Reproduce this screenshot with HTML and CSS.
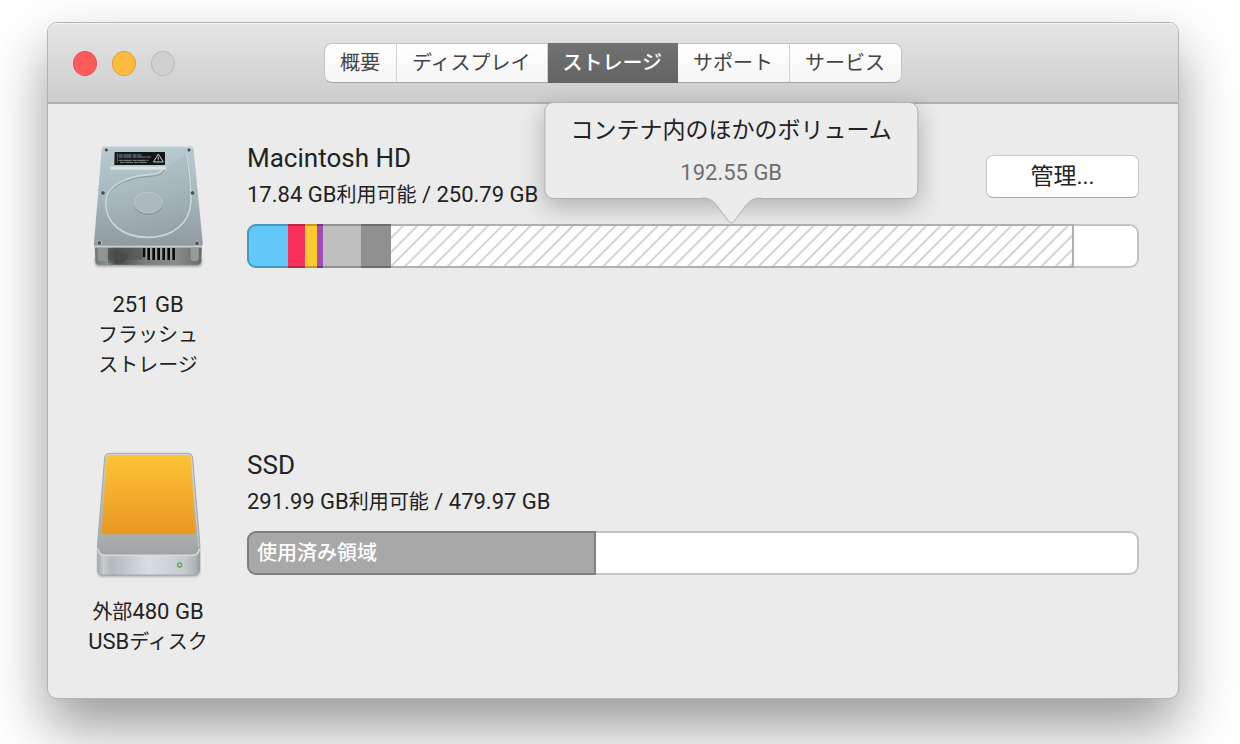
FILE: index.html
```
<!DOCTYPE html>
<html lang="ja">
<head>
    <meta charset="utf-8">
    <meta name="viewport" content="width=device-width,initial-scale=1.0">
    <title>ストレージ</title>
    <link rel="stylesheet" href="styles.css">
</head>
<body>
    <main class="window">
        <header class="toolbar">
            <div class="lights">
                <button class="light close" aria-label="閉じる"></button>
                <button class="light minimize" aria-label="しまう"></button>
                <button class="light" aria-label="拡大" disabled></button>
            </div>
            <nav class="tabs">
                <button>概要</button>
                <button>ディスプレイ</button>
                <button class="active">ストレージ</button>
                <button>サポート</button>
                <button>サービス</button>
            </nav>
        </header>
        <div class="content">
            <section class="disk">
                <div class="device">
                    <svg class="icon" viewBox="-6 0 420 450" aria-hidden="true">
                        <defs>
                            <linearGradient id="hd-top" x1="0" y1="0" x2="0" y2="1">
                                <stop offset="0" stop-color="#b9cbd1"/>
                                <stop offset=".45" stop-color="#a9b9c0"/>
                                <stop offset="1" stop-color="#8f999e"/>
                            </linearGradient>
                            <linearGradient id="hd-plate" x1="0" y1="0" x2="1" y2="1">
                                <stop offset="0" stop-color="#b7c9d0"/>
                                <stop offset="1" stop-color="#8f9da3"/>
                            </linearGradient>
                            <linearGradient id="hd-front" x1="0" y1="0" x2="1" y2="0">
                                <stop offset="0" stop-color="#737779"/>
                                <stop offset=".12" stop-color="#8b8f90"/>
                                <stop offset=".2" stop-color="#46494a"/>
                                <stop offset=".45" stop-color="#777b7c"/>
                                <stop offset=".75" stop-color="#8a8e8f"/>
                                <stop offset="1" stop-color="#65696a"/>
                            </linearGradient>
                            <filter id="soft" x="-20%" y="-100%" width="140%" height="300%"><feGaussianBlur stdDeviation="4"/></filter>
                        </defs>
                        <rect x="46" y="380" width="318" height="28" rx="10" fill="#555" opacity=".7" filter="url(#soft)"/>
                        <path d="M44 346H366L364 392Q363 404 350 404H60Q47 404 46 392Z" fill="url(#hd-front)"/>
                        <path d="M84 354H186V390H84Z" fill="#505354" opacity=".6"/>
                        <path d="M84 354L150 376L132 398H84Z" fill="#3d4041" opacity=".4"/>
                        <path d="M54 354H78V390Q66 398 54 390Z" fill="#8f9495"/>
                        <path d="M332 354H356V390Q344 398 332 390Z" fill="#969b9c"/>
                        <path d="M186 354H286V390H200L186 368Z" fill="#9a9d9d"/>
                        <path d="M192 354V382M206 354V390M221 354V390M236 354V390M251 354V390M266 354V390M281 354V390" stroke="#090b0b" stroke-width="8"/>
                        <path d="M76 48Q66 49 65 60L42 338Q41 351 52 352H358Q369 351 368 338L341 60Q340 49 330 48Z" fill="url(#hd-top)"/>
                        <path d="M44 350H366" stroke="#cbd1d3" stroke-width="5"/>
                        <path d="M70 50H337" stroke="#d8e2e5" stroke-width="3"/>
                        <path d="M320 76C328 120 334 180 333 218C330 285 276 326 204 326C128 326 76 284 77 220C78 174 128 142 208 136Q252 134 252 114" fill="url(#hd-plate)" fill-opacity=".4" stroke="none"/>
                        <path d="M320 78C328 124 335 184 334 220C331 286 277 328 204 328C127 328 76 286 77 222C78 176 128 144 208 138Q250 136 252 116" fill="none" stroke="#92a2a8" stroke-width="6"/>
                        <path d="M320 74C328 120 334 180 333 216C330 281 276 322 204 322C128 322 76 280 77 218C78 172 128 140 208 134Q248 132 250 112" fill="none" stroke="#cad7db" stroke-width="5"/>
                        <ellipse cx="205" cy="223" rx="43" ry="31" fill="#87959a"/>
                        <ellipse cx="205" cy="218" rx="42" ry="31" fill="#abb8bc" stroke="#becacd" stroke-width="3"/>
                        <path d="M98 64H255L258 116H91Z" fill="#b8c8ce"/>
                        <path d="M91 110H258V119H91Z" fill="#dae3e6"/>
                        <path d="M104 66H255V105H103Z" fill="#131616"/>
                        <path d="M112 70V99" stroke="#8c9698" stroke-width="2"/>
                        <path d="M116 75H184M116 81H214M116 91H205M120 97H200" stroke="#849092" stroke-width="3" stroke-dasharray="12 2 25 3"/>
                        <path d="M235 72L220 96H250Z" fill="none" stroke="#c2cacc" stroke-width="3"/>
                        <path d="M235 80V89M235 92V94" stroke="#c2cacc" stroke-width="3"/>
                        <g fill="#465056" stroke="#d7e0e3" stroke-width="2">
                            <circle cx="79" cy="60" r="6"/><circle cx="327" cy="60" r="6"/>
                            <circle cx="69" cy="189" r="7"/><circle cx="338" cy="189" r="7"/>
                            <circle cx="58" cy="339" r="7"/><circle cx="351" cy="340" r="7"/>
                        </g>
                    </svg>
                    <p>251 GB<br><span class="ja">フラッシュ<br>ストレージ</span></p>
                </div>
                <div class="info">
                    <div class="heading">
                        <div>
                            <h2>Macintosh HD</h2>
                            <p>17.84 GB<span class="ja">利用可能</span> / 250.79 GB</p>
                        </div>
                        <button class="manage">管理...</button>
                    </div>
                    <div class="bar">
                        <span class="part blue" style="width:4.6%"></span>
                        <span class="part red" style="width:1.9%"></span>
                        <span class="part yellow" style="width:1.3%"></span>
                        <span class="part purple" style="width:0.7%"></span>
                        <span class="part silver" style="width:4.3%"></span>
                        <span class="part gray" style="width:3.3%"></span>
                        <div class="part other" style="width:76.6%">
                            <div class="popover" role="tooltip">
                                <strong>コンテナ内のほかのボリューム</strong>
                                <span>192.55 GB</span>
                                <svg class="arrow" viewBox="0 0 60 27" aria-hidden="true">
                                    <path d="M0 0V1C9 1 12 4 16 9L27 24Q30 28 33 24L44 9C48 4 51 1 60 1V0Z" fill="#ececec"/>
                                    <path d="M0 1C9 1 12 4 16 9L27 24Q30 28 33 24L44 9C48 4 51 1 60 1" fill="none" stroke="#b0b0b0"/>
                                </svg>
                            </div>
                        </div>
                    </div>
                </div>
            </section>
            <section class="disk">
                <div class="device">
                    <svg class="icon" viewBox="-6 -9 420 450" aria-hidden="true">
                        <defs>
                            <linearGradient id="ssd-label" x1="0" y1="0" x2="0" y2="1">
                                <stop offset="0" stop-color="#fec338"/>
                                <stop offset="1" stop-color="#e99721"/>
                            </linearGradient>
                            <linearGradient id="ssd-top" x1="0" y1="0" x2="0" y2="1">
                                <stop offset="0" stop-color="#c9cdc9"/>
                                <stop offset=".8" stop-color="#abafb0"/>
                                <stop offset="1" stop-color="#9fa3a4"/>
                            </linearGradient>
                            <linearGradient id="ssd-front" x1="0" y1="0" x2="1" y2="0">
                                <stop offset="0" stop-color="#a3a8aa"/>
                                <stop offset=".06" stop-color="#c8cdd0"/>
                                <stop offset=".13" stop-color="#b3b9bc"/>
                                <stop offset=".5" stop-color="#d7dde0"/>
                                <stop offset=".85" stop-color="#c4cacd"/>
                                <stop offset=".95" stop-color="#aeb4b7"/>
                                <stop offset="1" stop-color="#959b9e"/>
                            </linearGradient>
                        </defs>
                        <rect x="54" y="382" width="304" height="27" rx="12" fill="#666" opacity=".6" filter="url(#soft)"/>
                        <path d="M52 330H360V386Q360 405 340 405H72Q52 405 52 386Z" fill="url(#ssd-front)" stroke="#989e9f" stroke-width="2"/>
                        <path d="M88 40H324Q336 40 338 54L360 320Q360 345 339 346H73Q52 345 52 320L74 54Q76 40 88 40Z" fill="url(#ssd-top)" stroke="#a2a8a5" stroke-width="3"/>
                        <path d="M54 326Q56 345 73 346H339Q356 345 358 326" fill="none" stroke="#d6dadc" stroke-width="5"/>
                        <path d="M78 54Q80 44 89 44H323Q332 44 334 54L356 320" fill="none" stroke="#d9ddda" stroke-width="2"/>
                        <path d="M88 45H323Q331 45 332 54L347 275Q347 283 338 283H73Q64 283 65 275L80 54Q81 45 88 45Z" fill="url(#ssd-label)"/>
                        <circle cx="299" cy="375" r="6" fill="#c4e5bc" stroke="#5ba453" stroke-width="4"/>
                    </svg>
                    <p><span class="ja">外部</span>480 GB<br>USB<span class="ja">ディスク</span></p>
                </div>
                <div class="info">
                    <div class="heading">
                        <div>
                            <h2>SSD</h2>
                            <p>291.99 GB<span class="ja">利用可能</span> / 479.97 GB</p>
                        </div>
                    </div>
                    <div class="bar">
                        <span class="part used" style="width:39.1%">使用済み領域</span>
                    </div>
                </div>
            </section>
        </div>
    </main>
</body>
</html>
```

FILE: styles.css
```
* { box-sizing: border-box; }
body {
    display: flex;
    min-height: 100vh;
    margin: 0;
    padding: 22px 61px 45px 47px;
    background: white;
    color: #222;
    font-family: Roboto, "Noto Sans CJK JP", sans-serif;
    font-size: 22px;
}
h2, p { margin: 0; font-weight: 400; }
button { font-family: inherit; }

.window {
    flex: 1;
    border: 1px solid #b2b2b2;
    border-radius: 10px;
    background: #ebebeb;
    box-shadow: 0 28px 56px rgba(0,0,0,.4);
}
.toolbar {
    display: grid;
    grid-template-columns: 1fr auto 1fr;
    align-items: center;
    height: 81px;
    padding: 1px 25px 0;
    border-bottom: 2px solid #b1b1b1;
    border-radius: 9px 9px 0 0;
    background: linear-gradient(#e5e5e5, #cdcdcd);
    box-shadow: inset 0 1px #f4f4f4;
}
.lights { display: flex; gap: 15px; }
.light { width: 24px; height: 25px; padding: 0; border: 1px solid #b9b9b9; border-radius: 50%; background: #d0d0d0; }
.close { border-color: #e2514e; background: #fc5b57; }
.minimize { border-color: #dfa136; background: #fdbc40; }

.tabs { display: flex; height: 40px; border: 1px solid #c3c3c3; border-bottom-color: #a5a5a5; border-radius: 8px; background: linear-gradient(#fff, #f5f5f5); }
.tabs button { margin: 0; padding: 0 16px 0 15px; border: 0; border-right: 1px solid #d2d2d2; background: none; color: #444; font-size: 20px; line-height: 38px; }
.tabs button:last-child { border-right: 0; }
.tabs .active { margin: -1px 0; border: 0; background: linear-gradient(#727272, #636363); color: white; font-weight: 500; }

.content { padding: 26px 39px 40px 30px; }
.disk { display: grid; grid-template-columns: 140px 1fr; gap: 29px; min-height: 307px; }
.disk:last-child { min-height: 0; }
.device { text-align: center; line-height: 30px; }
.device p { margin: 10px 0 0; }
.icon { display: block; width: 140px; height: 150px; }

.info { padding-top: 12px; }
.heading { display: flex; justify-content: space-between; align-items: flex-start; height: 82px; }
.heading h2 { font-size: 26px; line-height: 32px; }
.heading p { margin-top: 5px; line-height: 32px; }
.ja { font-size: 20px; }
.manage { width: 153px; height: 43px; margin-top: 13px; border: 1px solid #c6c6c6; border-bottom-color: #aaa; border-radius: 7px; background: white; color: #222; font-size: 23px; line-height: 38px; }

.bar { display: flex; height: 44px; border-radius: 9px; background: white; box-shadow: inset 0 0 0 2px #c4c4c4; }
.part { height: 44px; border: solid rgba(0,0,0,.24); border-width: 2px 0; }
.part:first-child { border-left-width: 2px; border-radius: 9px 0 0 9px; }
.blue { background: #61c8f9; }
.red { background: #fc315b; }
.yellow { background: #fecb2f; }
.purple { background: #9f4cb7; }
.silver { background: #bfbfbf; }
.gray { background: #909090; }
.used { padding-left: 8px; border-right-width: 2px; background: #a8a8a8; color: white; font-size: 20px; font-weight: 500; line-height: 40px; }
.other {
    position: relative;
    border-color: #b0b0b0;
    border-right-width: 2px;
    background: repeating-linear-gradient(135deg, #fff 0 7px, #d4d4d4 8px 9px, #fff 10px);
}

.popover {
    position: absolute;
    left: 50%;
    bottom: calc(100% + 27px);
    display: flex;
    flex-direction: column;
    align-items: center;
    padding: 12px 25px 9px;
    transform: translateX(-50%);
    border: 1px solid #b0b0b0;
    border-radius: 9px;
    background: #ececec;
    box-shadow: 0 8px 24px rgba(0,0,0,.25);
    white-space: nowrap;
}
.popover strong { font-size: 23px; font-weight: 400; line-height: 32px; }
.popover span { margin-top: 10px; color: #6e6e6e; line-height: 32px; }
.arrow { position: absolute; top: calc(100% - 1px); left: calc(50% - 30px); width: 60px; height: 27px; }
```
